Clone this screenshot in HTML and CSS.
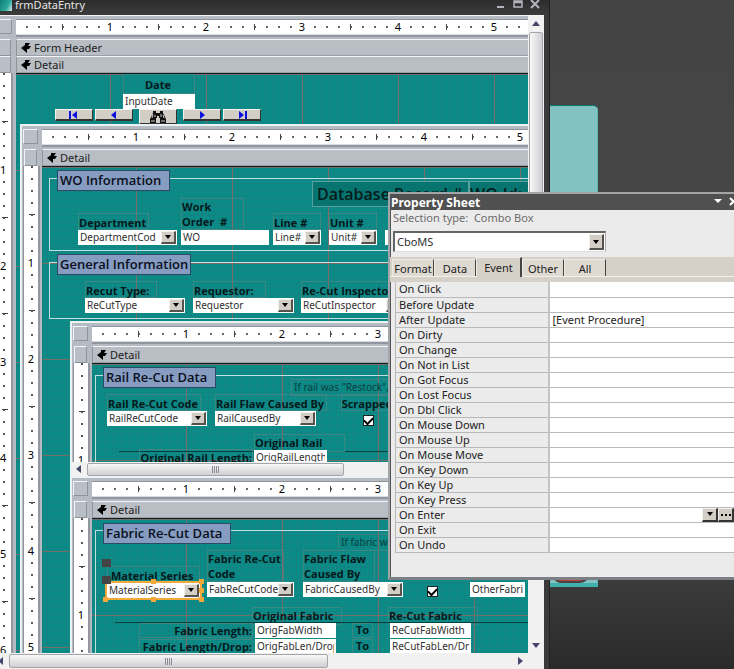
FILE: index.html
```
<!DOCTYPE html>
<html lang="en">
<head>
<meta charset="utf-8">
<title>frmDataEntry</title>
<link rel="stylesheet" href="styles.css">
</head>
<body>
<svg width="0" height="0" class="defs" aria-hidden="true">
  <symbol id="section" viewBox="0 0 10 10"><path d="M4 0H9L7 3H10L8 6H6V10L0 5L4 2Z"/></symbol>
  <symbol id="down" viewBox="0 0 6 4"><path d="M0 0H6L3 4Z"/></symbol>
</svg>
<main class="desktop">
  <div class="tile"><span></span></div>

  <section class="window">
    <header class="titlebar">
      <span class="app-icon"></span>
      <h1>frmDataEntry</h1>
      <svg class="win-buttons" viewBox="0 0 46 15" aria-hidden="true">
        <path d="M2 7H9M36 0L44 8M44 0L36 8" stroke-width="2"/>
        <path d="M19 1H27V7H19ZM19 2.500H27" stroke-width="1.500"/>
      </svg>
    </header>
    <div class="client">
      <div class="designer outer">
        <div class="head">
          <span class="corner"></span>
          <ol class="hruler"><li>1</li><li>2</li><li>3</li><li>4</li><li>5</li></ol>
          <span class="selector"></span>
          <h2 class="bar"><svg><use href="#section"/></svg>Form Header</h2>
          <span class="selector"></span>
          <h2 class="bar"><svg><use href="#section"/></svg>Detail</h2>
        </div>
        <div class="body">
          <ol class="vruler"><li>1</li><li>2</li><li>3</li><li>4</li><li>5</li><li>6</li></ol>
          <div class="canvas">
            <div class="field date"><label for="date">Date</label><input id="date" value="InputDate"></div>
            <div class="nav">
              <button aria-label="First record"><svg viewBox="0 0 10 8"><path d="M0 0H2V8H0ZM8 0V8L3 4Z"/></svg></button>
              <button aria-label="Previous record"><svg viewBox="0 0 10 8"><path d="M7 0V8L2 4Z"/></svg></button>
              <button class="find" aria-label="Find record"><svg viewBox="0 0 16 12"><path d="M3 0H6V2H10V0H13V2L16 8V12H10V7H9V5H7V7H6V12H0V8L3 2Z"/><path class="shine" d="M3 3L2 7M5 4V6M11 3V6M13 4L14 7M2 9V11M4 9V11M12 9V11M14 9V11"/></svg></button>
              <button aria-label="Next record"><svg viewBox="0 0 10 8"><path d="M3 0V8L8 4Z"/></svg></button>
              <button aria-label="Last record"><svg viewBox="0 0 10 8"><path d="M2 0V8L7 4ZM8 0H10V8H8Z"/></svg></button>
            </div>

            <div class="designer order">
              <div class="head">
                <span class="corner"></span>
                <ol class="hruler"><li>1</li><li>2</li><li>3</li><li>4</li><li>5</li></ol>
                <span class="selector"></span>
                <h2 class="bar"><svg><use href="#section"/></svg>Detail</h2>
              </div>
              <div class="body">
                <ol class="vruler"><li>1</li><li>2</li><li>3</li><li>4</li><li>5</li></ol>
                <div class="canvas">
                  <div class="frame frame-wo"></div>
                  <h3 class="caption cap-wo">WO Information</h3>
                  <div class="record"><span>Database Record #</span><span>WO-Id:</span></div>
                  <div class="field department"><label for="dep">Department</label>
                    <div class="combo"><select id="dep"><option>DepartmentCod</option></select><i><svg><use href="#down"/></svg></i></div></div>
                  <div class="field work"><label for="wo">Work<br>Order &nbsp;#</label><input id="wo" value="WO"></div>
                  <div class="field line"><label for="line">Line #</label>
                    <div class="combo"><select id="line"><option>Line#</option></select><i><svg><use href="#down"/></svg></i></div></div>
                  <div class="field unit"><label for="unit">Unit #</label>
                    <div class="combo"><select id="unit"><option>Unit#</option></select><i><svg><use href="#down"/></svg></i></div></div>
                  <div class="field qty"><input value="" aria-label="Quantity"></div>
                  <div class="frame frame-general"></div>
                  <h3 class="caption cap-general">General Information</h3>
                  <div class="field recut"><label for="recut">Recut Type:</label>
                    <div class="combo"><select id="recut"><option>ReCutType</option></select><i><svg><use href="#down"/></svg></i></div></div>
                  <div class="field requestor"><label for="req">Requestor:</label>
                    <div class="combo"><select id="req"><option>Requestor</option></select><i><svg><use href="#down"/></svg></i></div></div>
                  <div class="field inspector"><label for="ins">Re-Cut Inspector</label>
                    <div class="combo"><select id="ins"><option>ReCutInspector</option></select><i><svg><use href="#down"/></svg></i></div></div>

                  <div class="designer rail">
                    <div class="head">
                      <span class="corner"></span>
                      <ol class="hruler"><li>1</li><li>2</li><li>3</li></ol>
                      <span class="selector"></span>
                      <h2 class="bar"><svg><use href="#section"/></svg>Detail</h2>
                    </div>
                    <div class="body">
                      <ol class="vruler"><li>1</li></ol>
                      <div class="canvas">
                        <div class="frame frame-tall"></div>
                        <h3 class="caption cap-rail">Rail Re-Cut Data</h3>
                        <p class="note note-rail">If rail was "Restock",</p>
                        <div class="field rail-code"><label for="rcode">Rail Re-Cut Code</label>
                          <div class="combo"><select id="rcode"><option>RailReCutCode</option></select><i><svg><use href="#down"/></svg></i></div></div>
                        <div class="field rail-flaw"><label for="rflaw">Rail Flaw Caused By</label>
                          <div class="combo"><select id="rflaw"><option>RailCausedBy</option></select><i><svg><use href="#down"/></svg></i></div></div>
                        <div class="field scrapped"><label for="scrap">Scrapped</label><input id="scrap" type="checkbox" checked></div>
                        <hr class="rule-rail">
                        <p class="tag original-rail">Original Rail</p>
                        <label class="tag rail-length" for="rlen">Original Rail Length:</label>
                        <input class="box rail-box" id="rlen" value="OrigRailLength">
                      </div>
                    </div>
                    <div class="hscroll"><b class="left"></b><span class="thumb"></span></div>
                  </div>

                  <div class="designer fabric">
                    <div class="head">
                      <span class="corner"></span>
                      <ol class="hruler"><li>1</li><li>2</li><li>3</li></ol>
                      <span class="selector"></span>
                      <h2 class="bar"><svg><use href="#section"/></svg>Detail</h2>
                    </div>
                    <div class="body">
                      <ol class="vruler"><li>1</li></ol>
                      <div class="canvas">
                        <div class="frame frame-tall"></div>
                        <h3 class="caption cap-fabric">Fabric Re-Cut Data</h3>
                        <p class="note note-fabric">If fabric was</p>
                        <div class="field material"><label for="mat">Material Series</label>
                          <div class="combo selected"><select id="mat"><option>MaterialSeries</option></select><i><svg><use href="#down"/></svg></i>
                            <b class="grip nw"></b><b class="grip n"></b><b class="grip ne"></b><b class="grip e"></b><b class="grip se"></b><b class="grip s"></b><b class="grip sw"></b></div>
                          <b class="mover top"></b><b class="mover"></b></div>
                        <div class="field fab-code"><label for="fcode">Fabric Re-Cut<br>Code</label>
                          <div class="combo"><select id="fcode"><option>FabReCutCode_</option></select><i><svg><use href="#down"/></svg></i></div></div>
                        <div class="field fab-flaw"><label for="fflaw">Fabric Flaw<br>Caused By</label>
                          <div class="combo"><select id="fflaw"><option>FabricCausedBy</option></select><i><svg><use href="#down"/></svg></i></div></div>
                        <input class="fab-check" type="checkbox" checked aria-label="Scrapped">
                        <input class="box other" value="OtherFabric" aria-label="Other fabric">
                        <p class="tag original-fabric">Original Fabric</p>
                        <p class="tag recut-fabric">Re-Cut Fabric</p>
                        <div class="sizes">
                          <label for="fw">Fabric Length:</label><input id="fw" value="OrigFabWidth"><span>To</span><input value="ReCutFabWidth" aria-label="Re-cut width">
                          <label for="fl">Fabric Length/Drop:</label><input id="fl" value="OrigFabLen/Drop"><span>To</span><input value="ReCutFabLen/Dr" aria-label="Re-cut length">
                        </div>
                        <hr class="rule-fabric">
                      </div>
                    </div>
                  </div>
                </div>
              </div>
            </div>
          </div>
        </div>
      </div>
      <div class="vscroll"><b class="up"></b><span class="thumb"></span><b class="down"></b></div>
    </div>
    <div class="hscroll main-scroll"><b class="left"></b><span class="thumb"></span><b class="right"></b></div>
  </section>

  <aside class="sheet">
    <header><h2>Property Sheet</h2>
      <svg viewBox="0 0 24 10" aria-hidden="true"><path class="fill" d="M0 2H8L4 6Z"/><path d="M16 1L23 8M23 1L16 8"/></svg>
    </header>
    <p class="kind">Selection type: &nbsp;Combo Box</p>
    <div class="combo object"><select aria-label="Selected object"><option>CboMS</option></select><i><svg><use href="#down"/></svg></i></div>
    <nav class="tabs"><button>Format</button><button>Data</button><button class="active">Event</button><button>Other</button><button>All</button></nav>
    <div class="props">
      <table>
        <tr><th>On Click</th><td></td></tr>
        <tr><th>Before Update</th><td></td></tr>
        <tr><th>After Update</th><td>[Event Procedure]</td></tr>
        <tr><th>On Dirty</th><td></td></tr>
        <tr><th>On Change</th><td></td></tr>
        <tr><th>On Not in List</th><td></td></tr>
        <tr><th>On Got Focus</th><td></td></tr>
        <tr><th>On Lost Focus</th><td></td></tr>
        <tr><th>On Dbl Click</th><td></td></tr>
        <tr><th>On Mouse Down</th><td></td></tr>
        <tr><th>On Mouse Up</th><td></td></tr>
        <tr><th>On Mouse Move</th><td></td></tr>
        <tr><th>On Key Down</th><td></td></tr>
        <tr><th>On Key Up</th><td></td></tr>
        <tr><th>On Key Press</th><td></td></tr>
        <tr><th>On Enter</th><td><div class="builders"><button aria-label="Choose"><svg viewBox="0 0 12 8"><path d="M3 2H9L6 6Z"/></svg></button><button aria-label="Build"><svg viewBox="0 0 12 8"><path d="M1 4H3V6H1ZM5 4H7V6H5ZM9 4H11V6H9Z"/></svg></button></div></td></tr>
        <tr><th>On Exit</th><td></td></tr>
        <tr><th>On Undo</th><td></td></tr>
      </table>
    </div>
  </aside>
</main>
</body>
</html>
```
FILE: styles.css
```
* { box-sizing: border-box; }
body { margin: 0; font: 11px/15px "Noto Sans", "Open Sans", sans-serif; color: #222; }
h1, h2, h3, p, ol { margin: 0; padding: 0; font: inherit; list-style: none; }
button, input, select { font: inherit; color: inherit; margin: 0; padding: 0; border: 0; border-radius: 0; }
.defs { position: absolute; }

.desktop { position: relative; height: 100vh; overflow: hidden; background: linear-gradient(#444 0, #464646 30%, #3c3c3c 86%, #2a2a2a 100%); }
.tile { position: absolute; left: 550px; top: 105px; width: 48px; height: 482px; background: #82c3c1; border-top: 1px solid #0d7b72; border-right: 1px solid #5fb5b0; border-bottom: 4px solid #3fb0ae; border-radius: 0 5px 0 0; overflow: hidden; }
.tile span { position: absolute; left: 3px; bottom: 0; width: 38px; height: 12px; background: #c94032; border: 2px solid #444; border-radius: 0 0 12px 8px; }

/* Form window */
.window { position: absolute; left: 0; top: 0; bottom: 0; width: 550px; display: flex; flex-direction: column; background: #3a3a3c; border-right: 1px solid #222; }
.titlebar { flex: none; display: flex; height: 15px; overflow: hidden; background: linear-gradient(#2c2c2c, #3c3c3c); color: #e4e4e4; }
.titlebar h1 { flex: 1; line-height: 9px; }
.app-icon { width: 12px; height: 11px; margin-right: 3px; background: linear-gradient(120deg, #0f7d74, #2da89d 60%, #d8efe9); }
.win-buttons { width: 46px; height: 15px; margin-right: 8px; fill: none; stroke: #b4b4bc; }
.client { flex: 1; min-height: 0; display: flex; border-top: 1px solid #f4f4f6; margin-right: 5px; }

/* Design surface with rulers */
.designer { display: flex; flex-direction: column; background: #b6bac2; }
.designer .designer { position: absolute; border-top: 2px solid #e9f3f3; border-left: 2px solid #e9f3f3; }
.head { display: grid; grid-template-columns: 20px 1fr; grid-template-rows: 23px; grid-auto-rows: 17px; flex: none; }
.body { flex: 1; min-height: 0; display: grid; grid-template-columns: 20px 1fr; grid-template-rows: 100%; }
.outer { flex: 1; min-width: 0; }
.outer > .head, .outer > .body { grid-template-columns: 16px 1fr; }
.corner, .selector { margin: 3px 4px 5px 1px; border: 1px solid #8f939b; border-top-color: #f4f4f6; border-left-color: #f4f4f6; background: #b9bfc6; }
.selector { margin: 0 5px 0 2px; }
.hruler { margin: 4px 0 5px; display: flex; overflow: hidden; padding-left: 46px; box-shadow: 0 -1px #8f939b, 0 1px #d8dbe4, 0 3px #92969e;
  background: linear-gradient(90deg, #444 1px, transparent 1px) 46px 4px / 96px 6px repeat-x, linear-gradient(90deg, #666 2px, transparent 2px) 10px 6px / 12px 2px repeat-x, #fff; }
.hruler li { flex: none; width: 96px; line-height: 14px; text-align: center; color: #000; background: linear-gradient(#fff, #fff) center / 10px 100% no-repeat; }
.vruler { margin: 0 4px 0 2px; padding-top: 49px; overflow: hidden; box-shadow: -1px 0 #8f939b, 2px 0 #92969e;
  background: linear-gradient(#444 1px, transparent 1px) 5px 48px / 6px 96px repeat-y, linear-gradient(#555 2px, transparent 2px) 7px 12px / 2px 12px repeat-y, #fff; }
.vruler li { height: 96px; line-height: 96px; text-align: center; color: #000; background: linear-gradient(#fff, #fff) center / 100% 10px no-repeat; }
.outer > .body > .vruler { margin-left: 0; margin-right: 5px; background-position: 2px 48px, 3px 12px, 0 0; }
.outer > .body > .vruler li { padding-right: 5px; }
.outer > .head > .corner, .outer > .head > .selector { margin-left: -1px; }
.bar { display: flex; align-items: center; gap: 3px; padding-left: 4px; line-height: 15px; background: #b9bec5; border-top: 1px solid #f4f4f6; border-left: 1px solid #8f939b; border-bottom: 1px solid #9ba0a8; color: #1c1c1c; }
.bar svg { width: 10px; height: 10px; }
.canvas { position: relative; overflow: hidden; border-top: 1px solid #06201f; background-color: #0a8c87;
  background-image: linear-gradient(90deg, #7a6b6b 1px, transparent 1px), linear-gradient(#7a6b6b 1px, transparent 1px), linear-gradient(90deg, rgba(50,100,120,.2) 1px, transparent 1px), linear-gradient(rgba(50,100,120,.2) 1px, transparent 1px);
  background-size: 96px 96px, 96px 96px, 4px 4px, 4px 4px; background-position: 94px 0, 0 96px, 0 0, 0 0; }

/* Controls placed on a surface */
.field, .frame, .caption, .record, .note, .tag, .box, .nav, .sizes, .canvas > hr, .fab-check { position: absolute; }
.field { display: flex; flex-direction: column; align-items: flex-start; }
.field > label, .tag, .sizes label, .sizes span { font: 700 11px/16px "Comic Sans MS", "Open Sans", sans-serif; color: #03191b; white-space: nowrap; border: 1px solid #3b8783; }
.field > label { min-width: 72%; height: 17px; line-height: 17px; padding: 0 2px 0 0; }
.field > input:not([type=checkbox]), .combo { width: 100%; height: 15px; background: #fff; }
.canvas input:not([type=checkbox]) { padding: 0 2px; font-size: 10px; line-height: 15px; color: #303030; background: #fff; overflow: hidden; }
.combo { display: flex; padding: 0 1px 1px 0; background: #fff; }
.combo select { flex: 1; min-width: 0; appearance: none; background: none; padding: 0 0 0 2px; height: 15px; font-size: 10px; line-height: 15px; color: #303030; }
.combo i { flex: none; width: 15px; margin-top: 1px; display: flex; align-items: center; justify-content: center; background: #d2cec6; border: 1px solid #f4f2ee; border-right: 2px solid #55524e; border-bottom: 2px solid #55524e; }
.combo i svg { width: 6px; height: 4px; }
input[type=checkbox] { appearance: none; width: 11px; height: 11px; border: 1px solid #222; background: #fff; display: grid; place-items: center; }
input[type=checkbox]::before { content: ""; width: 7px; height: 4px; border: solid #000; border-width: 0 0 2px 2px; rotate: -45deg; translate: 0 -1px; }
.frame { left: 7px; right: -4px; border: 1px solid #bfe0dd; }
.caption { left: 15px; height: 21px; padding: 0 2px; font: 600 13px/19px "Comic Sans MS", "Open Sans", sans-serif; color: #0a1020; background: #869cc0; border: 1px solid #2c4a66; white-space: nowrap; }
.note { height: 17px; padding-left: 2px; font-size: 10px; line-height: 15px; border: 1px solid #3b8783; color: #06403e; white-space: nowrap; }
hr { margin: 0; border: 0; height: 1px; background: #06403e; }

.date { left: 107px; top: 0; width: 72px; }
.date > label { width: 100%; height: 20px; line-height: 20px; text-align: center; }
.nav { left: 39px; top: 35px; display: flex; gap: 2px; align-items: flex-start; }
.nav button { width: 38px; height: 12px; display: grid; place-items: center; background: #d2cec6; border: 1px solid #f4f2ee; border-right-color: #333; border-bottom: 2px solid #333; }
.nav svg { width: 10px; height: 8px; fill: #0a10e0; }
.nav .find { height: 16px; margin: 0 4px; }
.nav .find svg { width: 16px; height: 12px; fill: #111; }
.nav .shine { stroke: #ccc; fill: none; }

.order { left: 4px; top: 50px; right: 0; bottom: 0; }
.frame-wo { top: 11px; height: 73px; }
.cap-wo { top: 3px; width: 113px; }
.record { left: 270px; top: 14px; height: 26px; display: flex; font: 600 16px/24px "Comic Sans MS", "Open Sans", sans-serif; color: #041c1c; white-space: nowrap; }
.record span { width: 157px; padding-left: 4px; background: #087470; border: 1px solid #5aa09c; overflow: hidden; }
.record span + span { padding-left: 0; }
.department { left: 36px; top: 46px; width: 99px; }
.work { left: 139px; top: 31px; width: 88px; }
.work > label, .fab-code > label, .fab-flaw > label { height: 32px; line-height: 15px; }
.line { left: 231px; top: 46px; width: 48px; }
.unit { left: 287px; top: 46px; width: 48px; }
.qty { left: 343px; top: 63px; width: 48px; }
.line > label, .unit > label { width: 100%; }
.frame-general { top: 95px; height: 57px; }
.cap-general { top: 87px; width: 134px; }
.recut { left: 43px; top: 114px; width: 100px; }
.requestor { left: 151px; top: 114px; width: 101px; }
.inspector { left: 259px; top: 114px; width: 101px; }

.rail { left: 28px; top: 154px; right: 0; height: 155px; }
.frame-tall { left: 3px; top: 11px; bottom: -4px; }
.cap-rail { left: 11px; top: 3px; width: 113px; }
.note-rail { left: 199px; top: 15px; width: 120px; }
.rail-code { left: 15px; top: 30px; width: 100px; }
.rail-flaw { left: 123px; top: 30px; width: 101px; }
.scrapped { left: 243px; top: 30px; width: 66px; align-items: center; }
.scrapped > input { margin-top: 4px; }
.rule-rail { left: 27px; right: 0; top: 87px; }
.original-rail { left: 162px; top: 70px; width: 91px; }
.rail-length { left: 47px; top: 85px; width: 114px; text-align: right; }
.box { height: 15px; width: 73px; }
.rail-box { left: 162px; top: 86px; }

.fabric { left: 28px; top: 309px; right: 0; bottom: 0; }
.cap-fabric { left: 11px; top: 4px; width: 128px; }
.note-fabric { left: 246px; top: 15px; width: 120px; }
.material { left: 15px; top: 47px; width: 93px; }
.material > label { width: 100%; padding-left: 3px; }
.selected { position: relative; outline: 2px solid #f2a93a; }
.grip { position: absolute; width: 5px; height: 5px; background: #f2a93a; }
.nw { left: -4px; top: -4px; } .n { left: 44px; top: -4px; } .ne { right: -4px; top: -4px; }
.e { right: -4px; top: 5px; } .se { right: -4px; bottom: -4px; } .s { left: 44px; bottom: -4px; } .sw { left: -4px; bottom: -4px; }
.mover { position: absolute; left: -5px; top: 10px; width: 9px; height: 8px; background: #444; }
.mover.top { top: -7px; }
.fab-code { left: 115px; top: 31px; width: 87px; }
.fab-flaw { left: 211px; top: 31px; width: 100px; }
.fab-check { left: 335px; top: 67px; }
.other { left: 378px; top: 63px; width: 55px; }
.original-fabric { left: 160px; top: 88px; width: 90px; }
.recut-fabric { left: 296px; top: 88px; width: 90px; }
.sizes { left: 47px; top: 104px; display: grid; grid-template-columns: 116px 81px 21px 81px; grid-auto-rows: 15px; row-gap: 1px; }
.sizes label { margin-right: 2px; text-align: right; line-height: 14px; }
.sizes { grid-template-columns: 116px 97px 38px 81px; }
.sizes label + input { width: 81px; }
.sizes span { width: 21px; line-height: 12px; text-align: center; }
.rule-fabric { left: 23px; right: 0; top: 103px; }

/* Scroll bars */
.vscroll { width: 16px; display: flex; flex-direction: column; align-items: center; background: #f1f1f2; }
.vscroll .thumb { width: 14px; flex: 0 0 42%; margin-top: 6px; border: 1px solid #a5a5aa; border-radius: 2px; background: linear-gradient(90deg, #f8f8f8, #cfcfd3); }
.up, .down { border: 4px solid transparent; }
.up { border-top: 0; border-bottom: 5px solid #45486c; margin-top: 5px; }
.down { border-bottom: 0; border-top: 5px solid #45486c; margin-top: auto; margin-bottom: 5px; }
.hscroll { flex: none; height: 14px; display: flex; align-items: center; background: #f1f1f2; }
.hscroll .thumb { width: 257px; height: 13px; border: 1px solid #a5a5aa; border-radius: 2px; background: repeating-linear-gradient(90deg, #8a8a90 0 1px, transparent 1px 2px) center / 8px 7px no-repeat, linear-gradient(#f8f8f8, #cfcfd3); }
.left, .right { border: 4px solid transparent; }
.left { border-left: 0; border-right: 5px solid #45486c; margin: 0 6px 0 4px; }
.right { border-right: 0; border-left: 5px solid #45486c; margin-left: auto; margin-right: 21px; }
.main-scroll { height: 16px; margin-right: 5px; }
.main-scroll .left { margin: 0 6px 0 -2px; }
.main-scroll .thumb { width: 319px; height: 14px; }

/* Property sheet */
.sheet { position: absolute; left: 388px; right: -4px; top: 192px; background: #ebebeb; border: 2px solid #a3a6a9; border-bottom: 3px solid #7c8086; box-shadow: inset 1px 0 #555; }
.sheet header { display: flex; align-items: center; justify-content: space-between; height: 16px; padding: 0 0 0 1px; background: #505050; color: #fff; }
.sheet header h2 { font-size: 12px; font-weight: 700; }
.sheet header svg { width: 24px; height: 10px; fill: none; stroke: #fff; stroke-width: 2; margin-right: -2px; }
.sheet header .fill { fill: #fff; stroke: none; }
.kind { padding: 0 3px; color: #6c6c6c; }
.object { width: 213px; height: 21px; margin: 6px 0 5px 3px; border: 2px solid #666; border-right: 1px solid #aaa; border-bottom: 1px solid #ddd; }
.object select { height: 18px; font-size: 11px; line-height: 18px; }
.tabs { display: flex; align-items: flex-end; height: 20px; padding: 2px 2px 0; background: #d6d1c8; border-bottom: 1px solid #f2f0ec; }
.tabs button { height: 17px; width: 42px; background: #dedad2; border: 1px solid #efece6; border-bottom: 0; border-right: 1px solid #444; }
.tabs .active { height: 20px; width: 46px; margin-bottom: -1px; background: #d6d1c8; border-right-width: 2px; line-height: 14px; }
.props { padding: 5px 0 24px 5px; background: linear-gradient(#d6d1c8 5px, transparent 5px); }
table { width: 100%; border-collapse: collapse; table-layout: fixed; }
th, td { height: 15px; padding: 0 3px; line-height: 14px; border-bottom: 1px solid #b9b9b9; white-space: nowrap; }
th { width: 153px; text-align: left; font-weight: 400; border-left: 1px solid #b9b9b9; border-right: 2px solid #c4c4c4; }
td { background: #fff; }
.builders { display: flex; justify-content: flex-end; height: 14px; margin-right: -1px; }
.builders button { width: 16px; height: 14px; padding: 0 1px; background: #d2cec6; border: 1px solid #f4f2ee; border-right: 2px solid #333; border-bottom: 2px solid #333; }
.builders svg { display: block; width: 12px; height: 10px; }
```
